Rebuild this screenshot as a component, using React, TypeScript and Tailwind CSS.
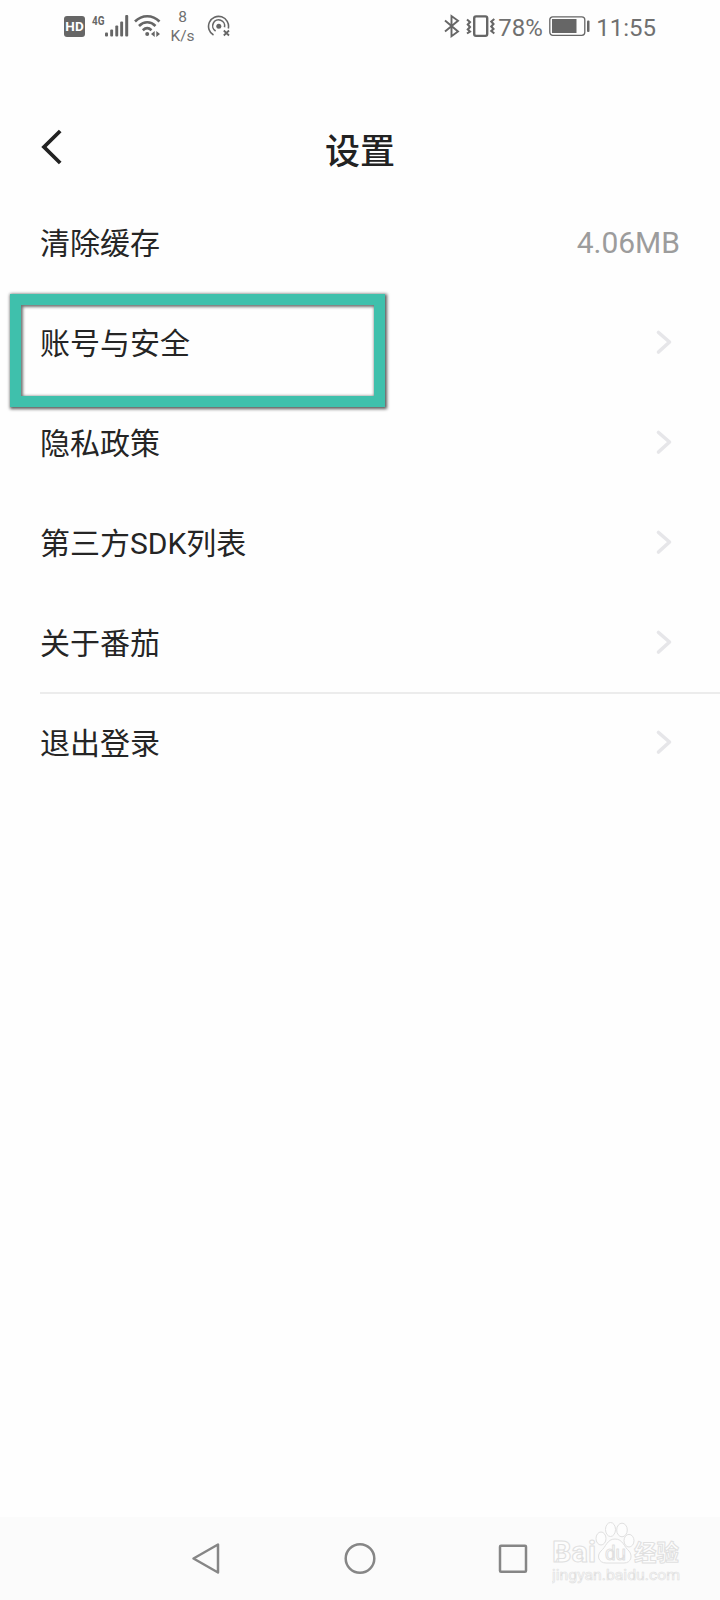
import type { ReactNode } from "react";

type Row = {
  label: string;
  value?: string;
  highlighted?: boolean;
  divider?: boolean;
};

const rows: Row[] = [
  { label: "清除缓存", value: "4.06MB" },
  { label: "账号与安全", highlighted: true },
  { label: "隐私政策" },
  { label: "第三方SDK列表" },
  { label: "关于番茄", divider: true },
  { label: "退出登录" },
];

function SignalIcon() {
  return (
    <svg className="mt-[14px] ml-[-3px]" width="24" height="24" viewBox="0 0 24 24" fill="#666">
      <rect x="0" y="18.5" width="3" height="4" rx="1" />
      <rect x="5.2" y="15.5" width="2.9" height="7" rx="1" />
      <rect x="10.3" y="11.5" width="2.9" height="11" rx="1" />
      <rect x="15.2" y="7.5" width="2.9" height="15" rx="1" />
      <rect x="20.2" y="1" width="3" height="21.5" rx="1" />
    </svg>
  );
}

function WifiIcon() {
  return (
    <svg className="mt-[14px] ml-[5px]" width="27" height="24" viewBox="0 0 27 24" fill="none" stroke="#666" strokeWidth="2.6">
      <path d="M1 7.5C8 .4 18.5 .4 25.5 7.5" />
      <path d="M5 12C10 7 16.5 7 21.5 12" />
      <path d="M8.8 16.2C11.6 13.7 14.8 13.7 17.5 16.2" />
      <circle cx="13.2" cy="20" r="2" fill="#666" stroke="none" />
      <path d="M20.7 17V23L17 20ZM22.3 17V23L26 20Z" fill="#666" stroke="none" />
    </svg>
  );
}

function HotspotIcon() {
  return (
    <svg className="mt-[14px] ml-[11px]" width="24" height="24" viewBox="0 0 24 24" fill="none" stroke="#666" strokeWidth="1.6">
      <path d="M6.5 21A10 10 0 1 1 21.3 14.5" />
      <path d="M8.6 17A6 6 0 1 1 17.5 13.3" />
      <circle cx="11.8" cy="12.3" r="2.5" fill="#666" stroke="none" />
      <path d="M16.8 16.5L22 21.5M22 16.5L16.8 21.5" strokeWidth="1.8" />
    </svg>
  );
}

function StatusBar() {
  return (
    <header className="flex h-[54px] items-start pl-[64px] text-[#707070]">
      <div className="mt-4 flex h-[21px] w-[21px] items-center justify-center rounded-[3px] bg-[#666] text-[13.5px] font-bold text-white">
        HD
      </div>
      <svg className="mt-[12px] ml-[5px]" width="18" height="18" viewBox="0 0 18 18">
        <text x="2" y="12.7" fontSize="12.5" fontWeight="700" fill="#666" textLength="12.5" lengthAdjust="spacingAndGlyphs">4G</text>
      </svg>
      <SignalIcon />
      <WifiIcon />
      <div className="mt-[8px] ml-[8px] w-[27px] text-center text-[15.5px] leading-[19px]">
        <div>8</div>
        <div>K/s</div>
      </div>
      <HotspotIcon />

      <div className="ml-auto flex items-start pr-[64px]">
        <svg className="mt-[14px]" width="16" height="24" viewBox="0 0 16 24" fill="none" stroke="#666" strokeWidth="1.9">
          <path d="M1 6.5L14 17.5L7.5 22.2V2L14 6.7L1 17.5" />
        </svg>
        <svg className="mt-[14px] ml-[6px]" width="30" height="24" viewBox="0 0 30 24" fill="none" stroke="#666" strokeWidth="2.1">
          <rect x="8.2" y="2.4" width="13" height="19.5" rx="1.8" strokeWidth="2.4" />
          <path d="M1 5.5L4 8L1.8 10.5L4 13L1.8 15.5L4 17.5L1 19.5" />
          <path d="M28.3 5L25.3 7.5L27.5 10L25.3 12.5L27.5 15L25.3 17L28.3 19.5" />
        </svg>
        <span className="mt-[14px] ml-[2px] w-[45px] text-[24px] leading-[28px]">78%</span>
        <svg className="mt-[14px] ml-[5px]" width="44" height="24" viewBox="0 0 44 24" fill="none" stroke="#666">
          <rect x="1.8" y="2.8" width="35" height="18.5" rx="3" strokeWidth="1.3" />
          <rect x="4" y="5" width="24.5" height="14" fill="#666" stroke="none" />
          <rect x="39" y="6.5" width="2.5" height="11.5" rx="1" fill="#666" stroke="none" />
        </svg>
        <span className="mt-[14px] ml-[4px] text-[24px] leading-[28px]">11:55</span>
      </div>
    </header>
  );
}

function TitleBar() {
  return (
    <div className="grid h-[139px] grid-cols-3 pt-[54px] text-[#222]">
      <button className="ml-[40px] h-[80px] w-[24px]" aria-label="返回">
        <svg className="-mt-[2px]" width="24" height="38" viewBox="0 0 24 38" fill="none" stroke="#222" strokeWidth="3.8">
          <path d="M20.2 3L4 19L20.2 35" />
        </svg>
      </button>
      <h1 className="mt-[19px] text-center text-[35px] leading-[52px] font-medium">设置</h1>
    </div>
  );
}

function SettingRow({ row }: { row: Row }) {
  return (
    <li className="relative h-[100px] pl-[40px]">
      <div
        className={`flex h-full items-center justify-between pr-[40px] text-[30px] leading-[44px] ${row.divider ? "shadow-[0_1px_0_#ececec,inset_0_-1px_0_#ececec]" : ""}`}
      >
        <span className="pt-[2px] text-[#252525]">{row.label}</span>
        {row.value ? (
          <span className="text-[#9c9c9c]">{row.value}</span>
        ) : (
          <svg className="mr-[5px] mb-[2px]" width="24" height="28" viewBox="0 0 24 28" fill="none" stroke="#e6e6e9" strokeWidth="3.6" strokeLinecap="round" strokeLinejoin="round">
            <path d="M7.5 4.5L18.5 14L7.500 24" />
          </svg>
        )}
      </div>
      {row.highlighted && (
        <div className="absolute top-[1px] left-[10px] h-[113px] w-[375px] border-[11.5px] border-[#3fc0ac] shadow-[1px_1px_3px_1px_rgba(0,0,0,0.65),inset_1px_1px_3px_1px_rgba(0,0,0,0.55)]" />
      )}
    </li>
  );
}

function NavKey({ children }: { children: ReactNode }) {
  return (
    <svg width="36" height="36" viewBox="0 0 36 36" fill="none" stroke="#868686" strokeWidth="2.5" strokeLinejoin="round">
      {children}
    </svg>
  );
}

function Watermark() {
  return (
    <svg width="140" height="70" viewBox="0 0 140 70" fill="#fdfdfd" stroke="#e0e0e0" strokeWidth="1" strokeLinejoin="round">
      <text x="0" y="40" fontSize="29" fontWeight="700" textLength="44" lengthAdjust="spacingAndGlyphs">Bai</text>
      <ellipse cx="49" cy="16.5" rx="5" ry="6.5" />
      <ellipse cx="58.5" cy="7.5" rx="5" ry="7" />
      <ellipse cx="70" cy="8" rx="5.3" ry="6.8" />
      <ellipse cx="77" cy="18.7" rx="5" ry="6.3" />
      <path d="M63 17C55 17 54 25 49 29C44 34 47 41 54 41H72C79 41 81 34 77 29C72 25 71 17 63 17Z" />
      <text x="53" y="38" fontSize="20" textLength="21" lengthAdjust="spacingAndGlyphs">du</text>
      <text x="82" y="39" fontSize="23" fontWeight="700" textLength="45" lengthAdjust="spacingAndGlyphs">经验</text>
      <text x="0" y="58" fontSize="14.5" strokeWidth="0.6" textLength="128" lengthAdjust="spacingAndGlyphs">jingyan.baidu.com</text>
    </svg>
  );
}

function NavBar() {
  return (
    <nav className="flex h-[83px] items-start bg-[#fbfbfb] pl-[188px]">
      <div className="mt-[23px] flex w-[342px] justify-between">
        <NavKey>
          <path d="M30 4.5V32.5L5.5 18.5Z" />
        </NavKey>
        <NavKey>
          <circle cx="19" cy="18.5" r="14.3" />
        </NavKey>
        <NavKey>
          <rect x="6" y="5.8" width="26" height="26" rx="1" />
        </NavKey>
      </div>
      <div className="mt-[5px] ml-[22px]">
        <Watermark />
      </div>
    </nav>
  );
}

export default function App() {
  return (
    <div className="flex h-[1600px] w-[720px] flex-col overflow-hidden bg-[#fefefe] font-[Roboto,'Noto_Sans_CJK_SC',sans-serif]">
      <StatusBar />
      <TitleBar />
      <ul className="flex-1">
        {rows.map((row) => (
          <SettingRow key={row.label} row={row} />
        ))}
      </ul>
      <NavBar />
    </div>
  );
}
